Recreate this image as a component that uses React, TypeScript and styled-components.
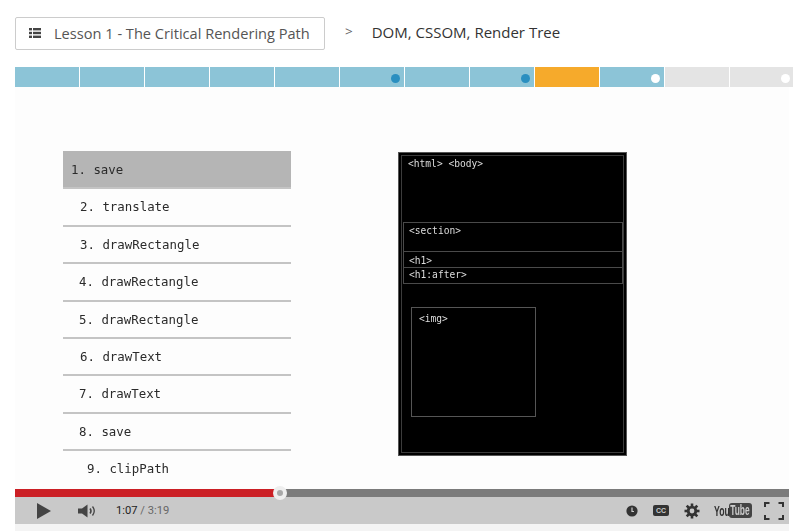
import * as React from 'react';
import styled, { createGlobalStyle } from 'styled-components';

const GlobalStyle = createGlobalStyle`
  html, body {
    margin: 0;
    padding: 0;
    height: 531px;
    overflow: hidden;
    background: #fff;
  }
`;

const segments = [
  { color: '#8cc4d7' },
  { color: '#8cc4d7' },
  { color: '#8cc4d7' },
  { color: '#8cc4d7' },
  { color: '#8cc4d7' },
  { color: '#8cc4d7', dot: '#2a8fc0' },
  { color: '#8cc4d7' },
  { color: '#8cc4d7', dot: '#2a8fc0' },
  { color: '#f6aa2b' },
  { color: '#8cc4d7', dot: '#fff' },
  { color: '#e4e4e4' },
  { color: '#e4e4e4', dot: '#fff' },
];

const calls = [
  { label: '1. save', indent: 8, active: true },
  { label: '2. translate', indent: 17 },
  { label: '3. drawRectangle', indent: 17 },
  { label: '4. drawRectangle', indent: 16 },
  { label: '5. drawRectangle', indent: 16 },
  { label: '6. drawText', indent: 17 },
  { label: '7. drawText', indent: 16 },
  { label: '8. save', indent: 16 },
  { label: '9. clipPath', indent: 24, last: true },
];

const App: React.FC = () => {
  return (
    <Page>
      <GlobalStyle />
      <Header>
        <LessonButton>
          <svg width="12" height="10" viewBox="0 0 12 10" fill="#444">
            <rect x="0" y="0" width="3" height="2.4" />
            <rect x="4" y="0" width="8" height="2.4" />
            <rect x="0" y="3.8" width="3" height="2.4" />
            <rect x="4" y="3.8" width="8" height="2.4" />
            <rect x="0" y="7.6" width="3" height="2.4" />
            <rect x="4" y="7.6" width="8" height="2.4" />
          </svg>
          <span>Lesson 1 - The Critical Rendering Path</span>
        </LessonButton>
        <Chevron>&gt;</Chevron>
        <Title>DOM, CSSOM, Render Tree</Title>
      </Header>

      <Progress>
        {segments.map((s, i) => (
          <Segment key={i} $color={s.color}>
            {s.dot && <Dot $color={s.dot} />}
          </Segment>
        ))}
      </Progress>

      <Player>
        <Slide>
          <CallList>
            {calls.map((c) => (
              <CallRow key={c.label} $indent={c.indent} $active={c.active} $last={c.last}>
                {c.label}
              </CallRow>
            ))}
          </CallList>

          <RenderBox>
            <InnerFrame>
              <BoxLabel>&lt;html&gt; &lt;body&gt;</BoxLabel>
              <LayerBox $height={30} $top={1}>&lt;section&gt;</LayerBox>
              <LayerBox $height={17} $top={2}>&lt;h1&gt;</LayerBox>
              <LayerBox $height={17}>&lt;h1:after&gt;</LayerBox>
              <ImageBox>&lt;img&gt;</ImageBox>
            </InnerFrame>
          </RenderBox>
        </Slide>

        <Scrubber>
          <Played />
          <Knob />
        </Scrubber>

        <Controls>
          <LeftControls>
            <svg width="14" height="16" viewBox="0 0 14 16" fill="#444">
              <path d="M0 0 L14 8 L0 16 Z" />
            </svg>
            <VolumeIcon width="19" height="14" viewBox="0 0 19 14">
              <path d="M0 4.5 H4 L9.5 0.5 V13.5 L4 9.5 H0 Z" fill="#444" />
              <path d="M12 4.5 Q14 7 12 9.5" fill="none" stroke="#444" strokeWidth="1.5" />
              <path d="M14.5 2.5 Q18 7 14.5 11.5" fill="none" stroke="#444" strokeWidth="1.3" />
            </VolumeIcon>
            <Time>
              <b>1:07</b> / 3:19
            </Time>
          </LeftControls>

          <RightControls>
            <svg width="12" height="12" viewBox="0 0 12 12">
              <circle cx="6" cy="6" r="5.6" fill="#333" />
              <path d="M6 2.5 V6.5 H8" fill="none" stroke="#ccc" strokeWidth="1.2" />
            </svg>
            <CcBadge>CC</CcBadge>
            <svg width="16" height="16" viewBox="0 0 16 16">
              <g stroke="#333" strokeWidth="2.6">
                <path d="M8 0.5 V15.5" />
                <path d="M0.5 8 H15.5" />
                <path d="M2.7 2.7 L13.3 13.3" />
                <path d="M13.3 2.7 L2.7 13.3" />
              </g>
              <circle cx="8" cy="8" r="5.2" fill="#333" />
              <circle cx="8" cy="8" r="2.4" fill="#c9c9c9" />
            </svg>
            <YouTubeLogo>
              <YouWord>You</YouWord>
              <TubePill>
                <TubeWord>Tube</TubeWord>
              </TubePill>
            </YouTubeLogo>
            <FullscreenIcon width="20" height="18" viewBox="0 0 20 18" fill="none" stroke="#333" strokeWidth="2">
              <path d="M5.5 1 H1 V5" />
              <path d="M14.5 1 H19 V5" />
              <path d="M5.5 17 H1 V13" />
              <path d="M14.5 17 H19 V13" />
            </FullscreenIcon>
          </RightControls>
        </Controls>
        <PlayerFoot />
      </Player>
    </Page>
  );
};

const Page = styled.div`
  width: 793px;
  height: 531px;
  overflow: hidden;
  padding: 17px 0 0 15px;
  box-sizing: border-box;
  font-family: 'Open Sans', 'Liberation Sans', sans-serif;
`;

const Header = styled.div`
  display: flex;
  align-items: center;
  height: 33px;
`;

const LessonButton = styled.div`
  display: flex;
  align-items: center;
  gap: 13px;
  box-sizing: border-box;
  width: 310px;
  height: 33px;
  padding: 0 0 1px 13px;
  border: 1px solid #ccc;
  border-radius: 2px;
  font-size: 14.6px;
  color: #555;
  white-space: nowrap;
`;

const Chevron = styled.span`
  margin: -5px 0 0 20px;
  font-size: 13.5px;
  color: #666;
`;

const Title = styled.span`
  margin: -3px 0 0 19px;
  font-size: 15px;
  color: #333;
`;

const Progress = styled.div`
  display: flex;
  gap: 1px;
  height: 20px;
  margin-top: 17px;
`;

const Segment = styled.div<{ $color: string }>`
  flex: 0 0 64px;
  display: flex;
  align-items: center;
  justify-content: flex-end;
  box-sizing: border-box;
  padding: 2px 4px 0 0;
  background: ${(p) => p.$color};
`;

const Dot = styled.span<{ $color: string }>`
  width: 9px;
  height: 9px;
  border-radius: 50%;
  background: ${(p) => p.$color};
`;

const Player = styled.div`
  width: 774px;
`;

const Slide = styled.div`
  display: flex;
  align-items: flex-start;
  gap: 107px;
  box-sizing: border-box;
  height: 402px;
  padding: 64px 0 0 48px;
  overflow: hidden;
  background: #fdfdfd;
`;

const CallList = styled.div`
  width: 228px;
  flex-shrink: 0;
`;

const CallRow = styled.div<{ $indent: number; $active?: boolean; $last?: boolean }>`
  box-sizing: border-box;
  height: ${(p) => (p.$active ? 38.4 : 37.4)}px;
  padding: ${(p) => (p.$active ? 11 : 10)}px 0 0 ${(p) => p.$indent}px;
  border-bottom: ${(p) => (p.$last ? 'none' : '2px solid #c4c4c4')};
  background: ${(p) => (p.$active ? '#b5b5b5' : 'transparent')};
  font-family: 'DejaVu Sans Mono', 'Liberation Mono', monospace;
  font-size: 12.4px;
  line-height: 16px;
  color: #2b2b2b;
  white-space: pre;
  filter: blur(0.3px);
`;

const RenderBox = styled.div`
  box-sizing: border-box;
  width: 229px;
  height: 304px;
  margin-top: 1px;
  padding: 2px;
  border: 1px solid #555;
  background: #000;
`;

const InnerFrame = styled.div`
  box-sizing: border-box;
  height: 100%;
  border: 1px solid #3c3c3c;
  font-family: 'DejaVu Sans Mono', 'Liberation Mono', monospace;
  font-size: 9.6px;
  color: #ddd;
  filter: blur(0.3px);
`;

const BoxLabel = styled.div`
  height: 66px;
  padding: 1px 0 0 6px;
  box-sizing: border-box;
  line-height: 13px;
`;

const LayerBox = styled.div<{ $height: number; $top?: number }>`
  box-sizing: border-box;
  height: ${(p) => p.$height}px;
  margin-left: 1px;
  margin-bottom: -1px;
  padding: ${(p) => p.$top ?? 0}px 0 0 5px;
  border: 1px solid #4a4a4a;
  line-height: 14px;
`;

const ImageBox = styled.div`
  box-sizing: border-box;
  width: 125px;
  height: 110px;
  margin: 24px 0 0 9px;
  padding: 4px 0 0 7px;
  border: 1px solid #555;
  line-height: 14px;
`;

const Scrubber = styled.div`
  position: relative;
  height: 8px;
  background: #7b7b7b;
`;

const Played = styled.div`
  width: 265px;
  height: 100%;
  background: #cb1f25;
`;

const Knob = styled.span`
  position: absolute;
  left: 258px;
  top: -3px;
  box-sizing: border-box;
  width: 14px;
  height: 14px;
  border: 4px solid #eee;
  border-radius: 50%;
  background: #a8a8a8;
`;

const Controls = styled.div`
  display: flex;
  align-items: center;
  justify-content: space-between;
  height: 27px;
  padding: 0 5px 0 22px;
  background: #c9c9c9;
`;

const LeftControls = styled.div`
  display: flex;
  align-items: center;
`;

const VolumeIcon = styled.svg`
  margin-left: 27px;
`;

const Time = styled.span`
  margin-left: 19px;
  font-family: Roboto, 'Liberation Sans', sans-serif;
  font-size: 11.2px;
  color: #666;

  b {
    font-weight: 400;
    color: #222;
  }
`;

const RightControls = styled.div`
  display: flex;
  align-items: center;
  gap: 15px;
`;

const CcBadge = styled.span`
  box-sizing: border-box;
  width: 16px;
  height: 11px;
  border-radius: 2px;
  background: #333;
  color: #ccc;
  font-family: 'Liberation Sans', sans-serif;
  font-size: 7px;
  font-weight: 700;
  line-height: 11px;
  text-align: center;
`;

const YouTubeLogo = styled.span`
  display: flex;
  align-items: center;
  width: 38px;
  margin-left: -1px;
  font-family: 'Liberation Sans', sans-serif;
  font-weight: 700;
  color: #333;
`;

const YouWord = styled.span`
  width: 15px;
  font-size: 15px;
  line-height: 15px;
  white-space: nowrap;
  transform: scaleX(0.58);
  transform-origin: left center;
`;

const TubePill = styled.span`
  width: 23px;
  height: 15px;
  border-radius: 3px;
  background: #444;
  overflow: hidden;
`;

const TubeWord = styled.span`
  display: block;
  padding-left: 2px;
  font-size: 14px;
  line-height: 15px;
  color: #ccc;
  white-space: nowrap;
  transform: scaleX(0.6);
  transform-origin: left center;
`;

const FullscreenIcon = styled.svg`
  margin-left: -3px;
`;

const PlayerFoot = styled.div`
  height: 7px;
  background: #f4f4f4;
`;

export default App;
